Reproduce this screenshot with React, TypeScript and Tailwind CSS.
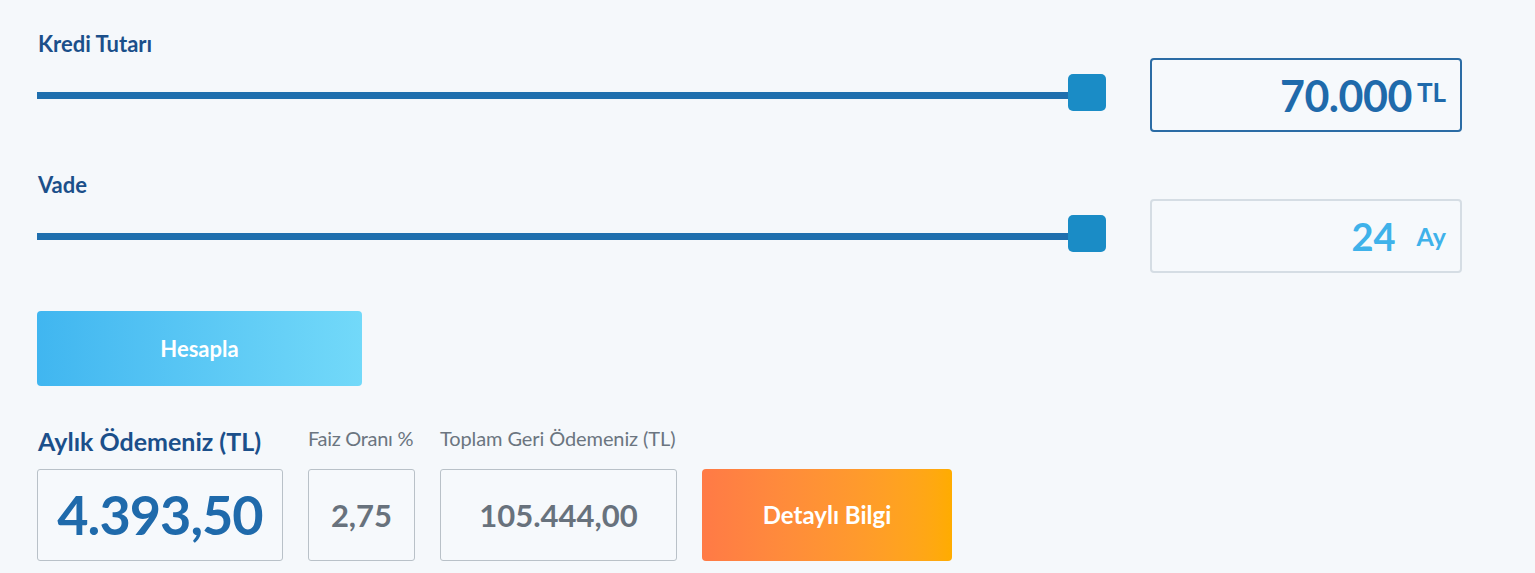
import React from "react";

type SliderProps = {
  label: string;
  children: React.ReactNode;
  boxClass: string;
  top: string;
};

function SliderRow({ label, children, boxClass, top }: SliderProps) {
  return (
    <div className={top}>
      <div className="h-6 text-[22px] leading-6 font-bold text-[#1b4f8a] pl-px">{label}</div>
      <div className="mt-[2px] flex h-[74px] items-center gap-[44px]">
        <div className="flex flex-1 items-center">
          <div className="h-[7px] flex-1 bg-[#1f6fae]" />
          <div className="-ml-[2px] -mt-[6px] h-[37px] w-[38px] rounded-[5px] bg-[#1a8cc6]" />
        </div>
        <div className={"flex h-[74px] w-[312px] items-center justify-end rounded-[4px] border-2 bg-[#f6f9fc] " + boxClass}>
          {children}
        </div>
      </div>
    </div>
  );
}

export default function App() {
  return (
    <div
      className="min-h-[573px] w-full bg-[#f5f8fb] pl-[37px] pr-[73px] pt-[32px]"
      style={{ fontFamily: "Lato, 'Open Sans', sans-serif" }}
    >
      <SliderRow label="Kredi Tutarı" boxClass="border-[#2b6ca5] pr-[14px]" top="">
        <span className="text-[43px] font-bold leading-none text-[#1f6aab] tracking-[-0.5px]">70.000</span>
        <span className="ml-[5px] mb-[6px] text-[26px] font-bold leading-none text-[#1f6aab]">TL</span>
      </SliderRow>

      <SliderRow label="Vade" boxClass="border-[#d5dde4] pr-[14px]" top="mt-[41px]">
        <span className="text-[38px] font-bold leading-none text-[#3fb2ea]">24</span>
        <span className="ml-[21px] text-[25px] font-bold leading-none text-[#3fb2ea]">Ay</span>
      </SliderRow>

      <button className="mt-[38px] flex h-[75px] w-[325px] items-center justify-center rounded-[4px] bg-gradient-to-r from-[#40b6f0] to-[#72d9f9] text-[22px] font-bold text-white">
        Hesapla
      </button>

      <div className="mt-[40px] flex items-end gap-[25px]">
        <div className="flex flex-col">
          <div className="pl-px text-[25px] font-bold leading-7 text-[#1b4f8a]">Aylık Ödemeniz (TL)</div>
          <div className="mt-[14px] flex h-[92px] w-[246px] items-center justify-center rounded-[3px] border border-[#b9c1c8] bg-[#f6f9fc]">
            <span className="text-[54px] font-bold leading-none text-[#1f6aab] tracking-[-1px]">4.393,50</span>
          </div>
        </div>
        <div className="flex flex-col">
          <div className="text-[20px] leading-6 text-[#6b7580] tracking-[-0.3px]">Faiz Oranı %</div>
          <div className="mt-[19px] flex h-[92px] w-[107px] items-center justify-center rounded-[3px] border border-[#b9c1c8] bg-[#f6f9fc]">
            <span className="text-[31px] font-bold leading-none text-[#68727d]">2,75</span>
          </div>
        </div>
        <div className="flex flex-col">
          <div className="text-[20px] leading-6 text-[#6b7580] tracking-[-0.1px]">Toplam Geri Ödemeniz (TL)</div>
          <div className="mt-[19px] flex h-[92px] w-[237px] items-center justify-center rounded-[3px] border border-[#b9c1c8] bg-[#f6f9fc]">
            <span className="text-[31px] font-bold leading-none text-[#68727d]">105.444,00</span>
          </div>
        </div>
        <button className="flex h-[92px] w-[250px] items-center justify-center rounded-[4px] bg-gradient-to-r from-[#ff7a46] to-[#ffac00] text-[24px] font-bold text-white">
          Detaylı Bilgi
        </button>
      </div>
    </div>
  );
}
